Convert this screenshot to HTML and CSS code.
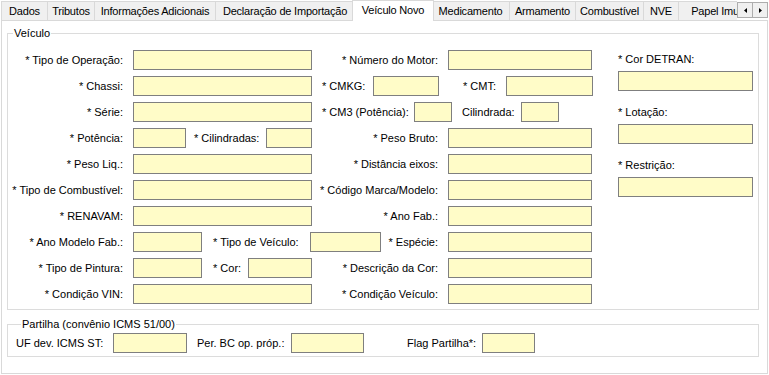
FILE: index.html
```html
<!DOCTYPE html>
<html lang="pt-BR">
<head>
<meta charset="utf-8">
<title>Veículo Novo</title>
<link rel="stylesheet" href="styles.css">
</head>
<body>
<div class="tabstrip">
  <div class="tabs">
    <span class="tab t-dados">Dados</span>
    <span class="tab t-trib">Tributos</span>
    <span class="tab t-info">Informações Adicionais</span>
    <span class="tab t-decl">Declaração de Importação</span>
    <span class="tab t-veic active">Veículo Novo</span>
    <span class="tab t-med">Medicamento</span>
    <span class="tab t-arm">Armamento</span>
    <span class="tab t-comb">Combustível</span>
    <span class="tab t-nve">NVE</span>
    <span class="tab t-papel">Papel Imune</span>
  </div>
  <div class="tabscroll">
    <span class="sbtn"><svg width="3" height="5" viewBox="0 0 3 5"><path d="M3 0L0 2.5L3 5Z" fill="#000"/></svg></span>
    <span class="sbtn"><svg width="3" height="5" viewBox="0 0 3 5"><path d="M0 0L3 2.5L0 5Z" fill="#000"/></svg></span>
  </div>
</div>

<div class="panel">
  <fieldset class="group veic">
    <legend>Veículo</legend>
    <div class="veic-body">
      <div class="form">
        <div class="row">
          <label class="lbl la">* Tipo de Operação:</label><input class="fld w179" type="text">
          <label class="lbl lm">* Número do Motor:</label><input class="fld w144" type="text">
        </div>
        <div class="row">
          <label class="lbl la">* Chassi:</label><input class="fld w179" type="text">
          <label class="lbl l-cmkg">* CMKG:</label><input class="fld w66" type="text">
          <label class="lbl l-cmt">* CMT:</label><input class="fld w87" type="text">
        </div>
        <div class="row">
          <label class="lbl la">* Série:</label><input class="fld w179" type="text">
          <label class="lbl l-cm3">* CM3 (Potência):</label><input class="fld w38" type="text">
          <label class="lbl l-cil">Cilindrada:</label><input class="fld w38" type="text">
        </div>
        <div class="row">
          <label class="lbl la">* Potência:</label><input class="fld w53" type="text">
          <label class="lbl l-cils">* Cilindradas:</label><input class="fld w46" type="text">
          <label class="lbl lm">* Peso Bruto:</label><input class="fld w144" type="text">
        </div>
        <div class="row">
          <label class="lbl la">* Peso Liq.:</label><input class="fld w179" type="text">
          <label class="lbl lm">* Distância eixos:</label><input class="fld w144" type="text">
        </div>
        <div class="row">
          <label class="lbl la">* Tipo de Combustível:</label><input class="fld w179" type="text">
          <label class="lbl lm">* Código Marca/Modelo:</label><input class="fld w144" type="text">
        </div>
        <div class="row">
          <label class="lbl la">* RENAVAM:</label><input class="fld w179" type="text">
          <label class="lbl lm">* Ano Fab.:</label><input class="fld w144" type="text">
        </div>
        <div class="row">
          <label class="lbl la">* Ano Modelo Fab.:</label><input class="fld w69" type="text">
          <label class="lbl l-tveic">* Tipo de Veículo:</label><input class="fld w71" type="text">
          <label class="lbl l-esp">* Espécie:</label><input class="fld w144" type="text">
        </div>
        <div class="row">
          <label class="lbl la">* Tipo de Pintura:</label><input class="fld w69" type="text">
          <label class="lbl l-cor">* Cor:</label><input class="fld w64" type="text">
          <label class="lbl lm">* Descrição da Cor:</label><input class="fld w144" type="text">
        </div>
        <div class="row">
          <label class="lbl la">* Condição VIN:</label><input class="fld w179" type="text">
          <label class="lbl lm">* Condição Veículo:</label><input class="fld w144" type="text">
        </div>
      </div>
      <div class="side">
        <label class="side-lbl">* Cor DETRAN:</label><input class="fld side-fld" type="text">
        <label class="side-lbl">* Lotação:</label><input class="fld side-fld" type="text">
        <label class="side-lbl">* Restrição:</label><input class="fld side-fld" type="text">
      </div>
    </div>
  </fieldset>

  <fieldset class="group part">
    <legend>Partilha (convênio ICMS 51/00)</legend>
    <div class="row">
      <label class="lbl p1">UF dev. ICMS ST:</label><input class="fld w74" type="text">
      <label class="lbl p2">Per. BC op. próp.:</label><input class="fld w73" type="text">
      <label class="lbl p3">Flag Partilha*:</label><input class="fld w53" type="text">
    </div>
  </fieldset>
</div>
</body>
</html>
```

FILE: styles.css
```css
* { box-sizing: border-box; }

html, body {
  margin: 0;
  padding: 0;
  background: #fff;
}

body {
  width: 769px;
  height: 375px;
  overflow: hidden;
  font: 11px/13px "Liberation Sans", Arial, sans-serif;
  color: #000;
}

/* ---------- tab strip ---------- */
.tabstrip {
  display: flex;
  height: 21px;
}

.tabs {
  flex: none;
  display: flex;
  align-items: flex-end;
  width: 737px;
  height: 21px;
  padding-left: 1px;
  overflow: hidden;
}

.tab {
  flex: none;
  height: 19px;
  margin: 0 0 1px -1px;
  padding-top: 1px;
  border: 1px solid #d9d9d9;
  border-bottom: 0;
  background: #f0f0f0;
  text-align: center;
  line-height: 17px;
  letter-spacing: -0.2px;
  white-space: nowrap;
  overflow: hidden;
}

.tab:first-child { margin-left: 0; }

.tab.active {
  position: relative;
  z-index: 2;
  height: 21px;
  margin: 0 -2px 0 -3px;
  padding-top: 0;
  background: #fff;
  line-height: 18px;
}

.t-dados { width: 47px; }
.t-trib  { width: 48px; }
.t-info  { width: 122px; }
.t-decl  { width: 140px; }
.t-veic  { width: 82px; }
.t-med   { width: 79px; }
.t-arm   { width: 67px; }
.t-comb  { width: 69px; }
.t-nve   { width: 36px; }
.t-papel { width: 86px; }

.tabscroll {
  display: flex;
  padding-top: 2px;
}

.sbtn {
  display: flex;
  align-items: center;
  justify-content: center;
  width: 16px;
  height: 16px;
  border: 1px solid #adadad;
  background: #f0f0f0;
}

.sbtn + .sbtn { margin-left: -1px; }

/* ---------- panel ---------- */
.panel {
  width: 767px;
  height: 354px;
  margin: -1px 0 0 1px;
  padding: 0 8px 0 5px;
  border: 1px solid #d9d9d9;
  background: #fff;
}

.group {
  min-inline-size: 0;
  margin: 0;
  border: 1px solid #dcdcdc;
}

.group legend {
  margin-left: 5px;
  padding: 0 1px;
  line-height: 13px;
}

.veic {
  margin-top: 6px;
  padding: 10px 0 5px;
}

.part {
  margin-top: 8px;
  padding: 2px 0 3px 8px;
}

.veic-body { display: flex; }

.form {
  display: flex;
  flex-direction: column;
  gap: 6px;
  width: 584px;
}

.row {
  display: flex;
  align-items: center;
  height: 20px;
}

.lbl {
  flex: none;
  white-space: nowrap;
}

.la { width: 125px; padding-right: 10px; text-align: right; }
.lm { width: 136px; padding-right: 10px; text-align: right; }

.l-cmkg  { width: 61px;  padding-left: 10px; }
.l-cmt   { width: 67px;  padding-left: 24px; }
.l-cm3   { width: 102px; padding-left: 10px; }
.l-cil   { width: 69px;  padding-left: 10px; }
.l-cils  { width: 80px;  padding-left: 8px; }
.l-tveic { width: 108px; padding-left: 11px; }
.l-esp   { width: 67px;  padding-right: 10px; text-align: right; }
.l-cor   { width: 46px;  padding-left: 11px; }

.p1 { width: 97px; }
.p2 { width: 104px; padding-left: 10px; }
.p3 { width: 118px; padding-left: 43px; }

.fld {
  flex: none;
  height: 20px;
  margin: 0;
  padding: 0 2px;
  border: 1px solid #7f7f7f;
  border-radius: 0;
  background: #fffcc8;
  font: inherit;
  outline: none;
}

.w38  { width: 38px; }
.w46  { width: 46px; }
.w53  { width: 53px; }
.w64  { width: 64px; }
.w66  { width: 66px; }
.w69  { width: 69px; }
.w71  { width: 71px; }
.w73  { width: 73px; }
.w74  { width: 74px; }
.w87  { width: 87px; }
.w144 { width: 144px; }
.w179 { width: 179px; }

.side {
  width: 135px;
  margin-left: 26px;
  padding-top: 1px;
}

.side-lbl {
  display: block;
  line-height: 16px;
  margin-bottom: 4px;
}

.side-fld {
  display: block;
  width: 135px;
  margin-bottom: 13px;
}
```
